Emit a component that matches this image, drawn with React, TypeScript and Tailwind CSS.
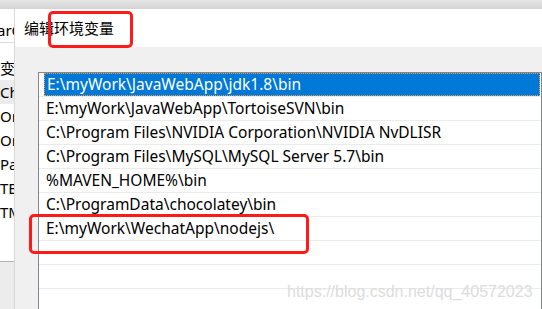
import React from 'react';

const paths = [
  'E:\\myWork\\JavaWebApp\\jdk1.8\\bin',
  'E:\\myWork\\JavaWebApp\\TortoiseSVN\\bin',
  'C:\\Program Files\\NVIDIA Corporation\\NVIDIA NvDLISR',
  'C:\\Program Files\\MySQL\\MySQL Server 5.7\\bin',
  '%MAVEN_HOME%\\bin',
  'C:\\ProgramData\\chocolatey\\bin',
  'E:\\myWork\\WechatApp\\nodejs\\',
  '',
  '',
  '',
];

const sideItems = ['变量', 'Ch', 'Or', 'Or', 'Pa', 'TE', 'TM'];

export default function App() {
  return (
    <div
      className="relative w-[542px] h-[309px] overflow-hidden bg-[#f0f0f0] flex flex-col text-[#000]"
      style={{ fontFamily: '"Noto Sans", "Noto Sans CJK SC", sans-serif' }}
    >
      {/* window behind, top strip */}
      <div className="h-[9px] shrink-0 bg-gradient-to-b from-[#e6e6e6] to-[#d4d4d4]" />

      <div className="flex flex-1 min-h-0">
        {/* window behind, left edge */}
        <div className="w-[14px] shrink-0 flex flex-col overflow-hidden">
          <div className="h-[252px] bg-white flex flex-col">
            <div className="h-[34px] border-b border-[#dcdcdc] flex items-end pb-[1px] whitespace-nowrap text-[15px] -ml-[3px]">
              arC
            </div>
            <div className="pt-[13px] flex flex-col">
              {sideItems.map((s, i) => (
                <div
                  key={i}
                  className={`h-[24px] flex items-center whitespace-nowrap text-[15px] ${i === 1 ? 'bg-[#ececec]' : ''}`}
                >
                  {s}
                </div>
              ))}
            </div>
          </div>
          <div className="flex-1 border-t border-[#b4b4b4] bg-[#ececec]" />
        </div>

        {/* dialog */}
        <div className="flex-1 flex flex-col border-l border-[#d8d8d8] min-w-0">
          <div className="h-[38px] shrink-0 bg-white flex items-center pl-[9px] text-[15px]">
            编辑环境变量
          </div>
          <div className="flex-1 pl-[23px] pt-[25px] min-w-0">
            <div className="h-full border border-[#828790] bg-white">
              {paths.map((p, i) => (
                <div key={i} className="h-[24px] border-b border-[#ebebeb] pl-[5px] pr-[1px]">
                  <div
                    className={`h-full flex items-center pl-[2px] text-[15.5px] whitespace-nowrap ${
                      i === 0 ? 'bg-[#0078d7] text-white border border-dotted border-[#f0a040]' : ''
                    }`}
                  >
                    {p}
                  </div>
                </div>
              ))}
            </div>
          </div>
        </div>
      </div>

      {/* annotations */}
      <div className="absolute left-[48px] top-[11px] w-[85px] h-[37px] border-[3px] border-[#ff1a1a] rounded-[5px]" />
      <div className="absolute left-[29px] top-[214px] w-[280px] h-[40px] border-[3px] border-[#ff1a1a] rounded-[5px]" />

      {/* watermark */}
      <div
        className="absolute left-[287px] top-[280px] text-[16px] text-[#dcdcdc] whitespace-nowrap"
        style={{ fontFamily: '"Liberation Sans", Arial, sans-serif' }}
      >
        https://blog.csdn.net/qq_40572023
      </div>
    </div>
  );
}
